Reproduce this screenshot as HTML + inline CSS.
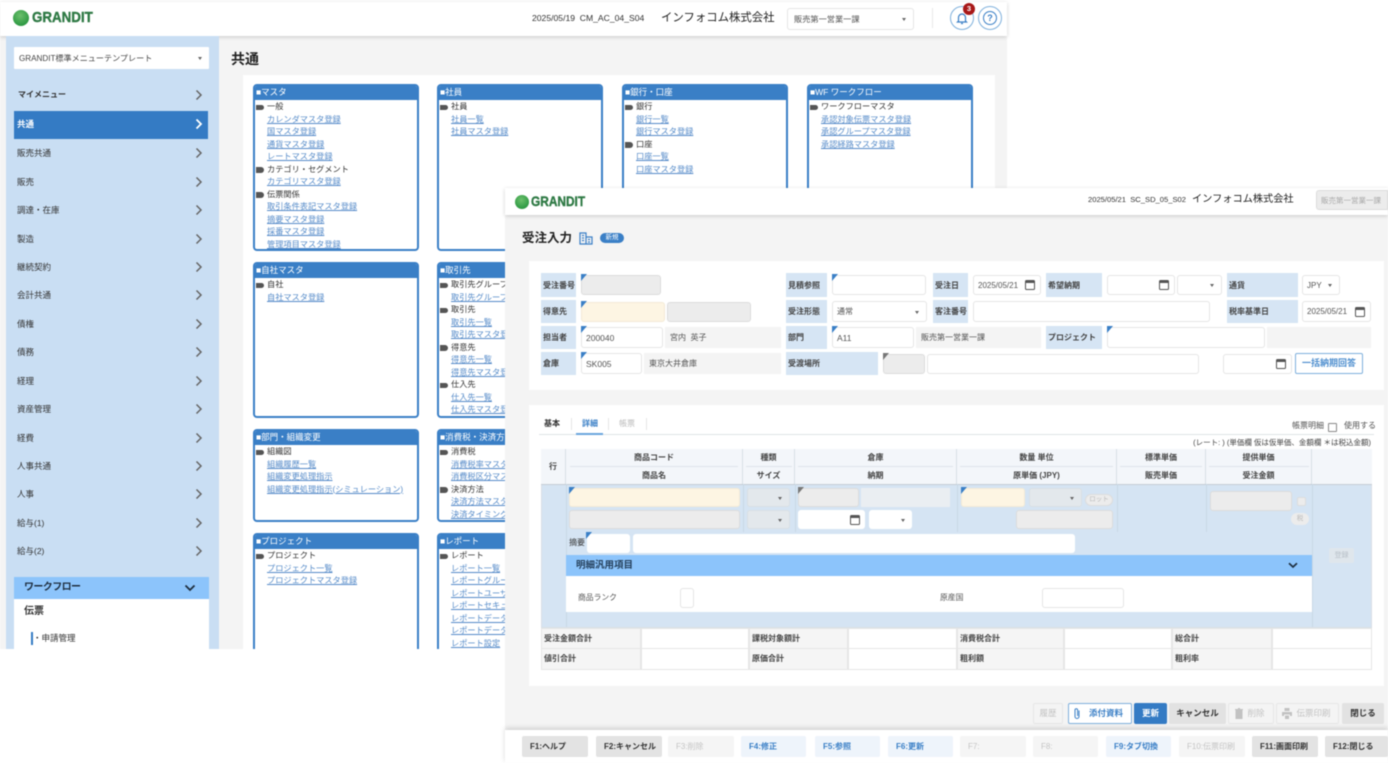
<!DOCTYPE html>
<html lang="ja"><head><meta charset="utf-8"><title>GRANDIT</title>
<style>
html,body{margin:0;padding:0;width:1388px;height:763px;overflow:hidden;background:#fff}
body{position:relative;font-family:"Liberation Sans","Noto Sans CJK JP",sans-serif;color:#333;filter:blur(.45px)}
div,span,a{box-sizing:border-box}
.a{position:absolute}
.t{position:absolute;white-space:nowrap;line-height:12px}
.logo{position:absolute;color:#2f7a45;font-weight:bold;transform-origin:0 50%;white-space:nowrap;-webkit-text-stroke:.4px #2f7a45}
.ball{position:absolute;border-radius:50%;background:radial-gradient(circle at 45% 35%,#6cc06c,#2f9a44 70%)}
.m{position:absolute;left:6px;width:213px;height:28px;font-size:8.5px;line-height:28px;padding-left:11px;white-space:nowrap}
.m svg{position:absolute;left:189px;top:8px}
.card{position:absolute;border:2px solid #3a7fc6;border-radius:4px;background:#fff;overflow:hidden;font-size:8.2px;line-height:12.5px}
.card b{display:block;height:14px;margin:0 0 1px;background:#3a7fc6;color:#fff;font-size:8.5px;line-height:13px;padding-left:1px;font-weight:normal;white-space:nowrap}
.h{position:relative;padding-left:12px;white-space:nowrap;color:#333}
.h::before{content:"";position:absolute;left:1px;top:3.5px;width:8px;height:5.5px;background:#555;border-radius:0 3px 3px 0}
.l{display:block;padding-left:12px;color:#568bc9;text-decoration:underline;white-space:nowrap}
.lb{position:absolute;background:#d6e5f4;font-size:8px;font-weight:bold;padding-left:2px;display:flex;align-items:center;white-space:nowrap;color:#444}
.f{position:absolute;background:#fff;border:1px solid #e5e5e5;border-radius:3px;font-size:8.5px;display:flex;align-items:center;padding-left:4px;white-space:nowrap;color:#555}
.g{background:#ececec;border-color:#dcdcdc}
.y{background:#fdf5e3;border-color:#f3ead6}
.s{background:#e3e8ec;border-color:#d9dfe4}
.n{position:absolute;background:#f4f4f4;font-size:8px;display:flex;align-items:center;padding-left:5px;white-space:nowrap;color:#555}
.k::before{content:"";position:absolute;left:-1px;top:-2px;border-top:7px solid #3a7fc6;border-right:6px solid transparent}
.kg::before{border-top-color:#777}
.ar::after{content:"";position:absolute;right:7px;top:50%;margin-top:-1px;border-top:3px solid #666;border-left:2.5px solid transparent;border-right:2.5px solid transparent}
.cal::after{content:"";position:absolute;right:5px;top:50%;margin-top:-5px;width:10px;height:10px;border:1.2px solid #555;border-top-width:3px;border-radius:1.5px;box-sizing:border-box}
.th{position:absolute;background:#f3f6fa;border-right:1px solid #d8dfe6;font-size:8px;font-weight:bold;color:#444;text-align:center;line-height:17px;white-space:nowrap}
.sm{position:absolute;font-size:8px;font-weight:bold;color:#444;background:#f5f5f5;border:1px solid #e6e6e6;padding-left:2px;line-height:19px;white-space:nowrap}
.sv{position:absolute;background:#fff;border:1px solid #e6e6e6}
.b{position:absolute;top:703px;height:21px;border-radius:2px;font-size:8.5px;font-weight:bold;text-align:center;line-height:21px;white-space:nowrap}
.bd{background:#f4f4f4;border:1px solid #e6e6e6;color:#c2c2c2;line-height:19px;font-weight:normal}
.bg{background:#e2e2e2;color:#333}
.fk{position:absolute;top:736px;height:21px;border-radius:2px;font-size:8px;font-weight:bold;line-height:21px;text-align:left;padding-left:8px;white-space:nowrap}
.f1{background:#e3e3e3;color:#333}
.f2{background:#f5f5f5;color:#c4c4c4;font-weight:normal}
.f3{background:#eef4fb;color:#3a7fc6}
</style></head><body>

<!-- BACK WINDOW -->
<div class="a" style="left:0;top:36px;width:1007px;height:613px;background:#f4f4f4"></div>
<div class="a" style="left:0;top:2px;width:1007px;height:34px;background:#fff;box-shadow:0 1px 4px rgba(0,0,0,.18)"></div>
<div class="ball" style="left:13px;top:10px;width:16px;height:16px"></div>
<div class="logo" style="left:32px;top:9px;font-size:15px;line-height:18px;transform:scaleX(.89)">GRANDIT</div>
<div class="t" style="left:532px;top:12px;font-size:8.6px">2025/05/19&nbsp; CM_AC_04_S04</div>
<div class="t" style="left:661px;top:11px;font-size:11.4px;line-height:14px;color:#222">インフォコム株式会社</div>
<div class="f ar" style="left:787px;top:8px;width:127px;height:22px;font-size:8.2px;padding-left:6px">販売第一営業一課</div>
<div class="a" style="left:932px;top:8px;width:1px;height:20px;background:#e8e8e8"></div>
<div class="a" style="left:950px;top:6px;width:24px;height:24px;border:1.2px solid #7fb0dc;border-radius:50%"></div>
<svg class="a" style="left:955px;top:11px" width="14" height="14" viewBox="0 0 14 14"><path d="M3.5 10V6.5a3.5 3.5 0 0 1 7 0V10l1 1H2.5zM6 12.5h2" fill="none" stroke="#3a7fc6" stroke-width="1.2"/></svg>
<div class="a" style="left:963px;top:3px;width:12px;height:12px;border-radius:50%;background:#a81818;color:#fff;font-size:7.5px;font-weight:bold;line-height:12px;text-align:center">3</div>
<div class="a" style="left:978px;top:6px;width:24px;height:24px;border:1.2px solid #7fb0dc;border-radius:50%"></div>
<div class="a" style="left:983px;top:11px;width:14px;height:14px;border:1.2px solid #3a7fc6;border-radius:50%;color:#3a7fc6;font-size:9px;font-weight:bold;line-height:12px;text-align:center">?</div>

<!-- sidebar -->
<div class="a" style="left:6px;top:36px;width:213px;height:613px;background:#c9def3"></div>
<div class="f ar" style="left:14px;top:47px;width:195px;height:22px;border:0;border-radius:1px;font-size:8.1px;color:#444;padding-left:5px">GRANDIT標準メニューテンプレート</div>
<div class="a" style="left:14px;top:111px;width:194px;height:28px;background:#347bc4"></div>
<div class="m" style="top:81px;font-size:8px;font-weight:bold;padding-left:12px"><svg width="8" height="12" viewBox="0 0 8 12"><path d="M1.5 1.5 6 6l-4.5 4.5" fill="none" stroke="#666" stroke-width="1.5"/></svg>マイメニュー</div>
<div class="m" style="top:110px;color:#fff;font-weight:bold"><svg width="8" height="12" viewBox="0 0 8 12"><path d="M1.5 1.5 6 6l-4.5 4.5" fill="none" stroke="#fff" stroke-width="1.8"/></svg>共通</div>
<div class="m" style="top:139px"><svg width="8" height="12" viewBox="0 0 8 12"><path d="M1.5 1.5 6 6l-4.5 4.5" fill="none" stroke="#666" stroke-width="1.5"/></svg>販売共通</div>
<div class="m" style="top:168px"><svg width="8" height="12" viewBox="0 0 8 12"><path d="M1.5 1.5 6 6l-4.5 4.5" fill="none" stroke="#666" stroke-width="1.5"/></svg>販売</div>
<div class="m" style="top:196px"><svg width="8" height="12" viewBox="0 0 8 12"><path d="M1.5 1.5 6 6l-4.5 4.5" fill="none" stroke="#666" stroke-width="1.5"/></svg>調達・在庫</div>
<div class="m" style="top:225px"><svg width="8" height="12" viewBox="0 0 8 12"><path d="M1.5 1.5 6 6l-4.5 4.5" fill="none" stroke="#666" stroke-width="1.5"/></svg>製造</div>
<div class="m" style="top:253px"><svg width="8" height="12" viewBox="0 0 8 12"><path d="M1.5 1.5 6 6l-4.5 4.5" fill="none" stroke="#666" stroke-width="1.5"/></svg>継続契約</div>
<div class="m" style="top:281px"><svg width="8" height="12" viewBox="0 0 8 12"><path d="M1.5 1.5 6 6l-4.5 4.5" fill="none" stroke="#666" stroke-width="1.5"/></svg>会計共通</div>
<div class="m" style="top:310px"><svg width="8" height="12" viewBox="0 0 8 12"><path d="M1.5 1.5 6 6l-4.5 4.5" fill="none" stroke="#666" stroke-width="1.5"/></svg>債権</div>
<div class="m" style="top:338px"><svg width="8" height="12" viewBox="0 0 8 12"><path d="M1.5 1.5 6 6l-4.5 4.5" fill="none" stroke="#666" stroke-width="1.5"/></svg>債務</div>
<div class="m" style="top:367px"><svg width="8" height="12" viewBox="0 0 8 12"><path d="M1.5 1.5 6 6l-4.5 4.5" fill="none" stroke="#666" stroke-width="1.5"/></svg>経理</div>
<div class="m" style="top:395px"><svg width="8" height="12" viewBox="0 0 8 12"><path d="M1.5 1.5 6 6l-4.5 4.5" fill="none" stroke="#666" stroke-width="1.5"/></svg>資産管理</div>
<div class="m" style="top:424px"><svg width="8" height="12" viewBox="0 0 8 12"><path d="M1.5 1.5 6 6l-4.5 4.5" fill="none" stroke="#666" stroke-width="1.5"/></svg>経費</div>
<div class="m" style="top:452px"><svg width="8" height="12" viewBox="0 0 8 12"><path d="M1.5 1.5 6 6l-4.5 4.5" fill="none" stroke="#666" stroke-width="1.5"/></svg>人事共通</div>
<div class="m" style="top:480px"><svg width="8" height="12" viewBox="0 0 8 12"><path d="M1.5 1.5 6 6l-4.5 4.5" fill="none" stroke="#666" stroke-width="1.5"/></svg>人事</div>
<div class="m" style="top:509px"><svg width="8" height="12" viewBox="0 0 8 12"><path d="M1.5 1.5 6 6l-4.5 4.5" fill="none" stroke="#666" stroke-width="1.5"/></svg>給与(1)</div>
<div class="m" style="top:537px"><svg width="8" height="12" viewBox="0 0 8 12"><path d="M1.5 1.5 6 6l-4.5 4.5" fill="none" stroke="#666" stroke-width="1.5"/></svg>給与(2)</div>
<div class="a" style="left:14px;top:577px;width:195px;height:22px;background:#8cc4fb;font-size:10px;font-weight:bold;line-height:22px;padding-left:10px;letter-spacing:-.6px;color:#1f2f40">ワークフロー</div>
<svg class="a" style="left:184px;top:584px" width="12" height="8" viewBox="0 0 12 8"><path d="M1.5 1.5 6 6l4.5-4.5" fill="none" stroke="#1f2f40" stroke-width="1.8"/></svg>
<div class="a" style="left:14px;top:599px;width:195px;height:50px;background:#fff"></div>
<div class="t" style="left:24px;top:606px;font-size:10px;font-weight:bold">伝票</div>
<div class="a" style="left:31px;top:632px;width:1.5px;height:13px;background:#347bc4"></div>
<div class="t" style="left:33px;top:632px;font-size:8.5px">・申請管理</div>

<!-- content -->
<div class="t" style="left:231px;top:51px;font-size:14px;font-weight:bold;line-height:16px;color:#222">共通</div>
<div class="a" style="left:243px;top:75px;width:752px;height:574px;background:#fff"></div>

<div class="card" style="left:253px;top:84px;width:166px;height:167px"><b>■マスタ</b><div class="h">一般</div><a class="l">カレンダマスタ登録</a><a class="l">国マスタ登録</a><a class="l">通貨マスタ登録</a><a class="l">レートマスタ登録</a><div class="h">カテゴリ・セグメント</div><a class="l">カテゴリマスタ登録</a><div class="h">伝票関係</div><a class="l">取引条件表記マスタ登録</a><a class="l">摘要マスタ登録</a><a class="l">採番マスタ登録</a><a class="l">管理項目マスタ登録</a></div>
<div class="card" style="left:437px;top:84px;width:166px;height:167px"><b>■社員</b><div class="h">社員</div><a class="l">社員一覧</a><a class="l">社員マスタ登録</a></div>
<div class="card" style="left:622px;top:84px;width:166px;height:167px"><b>■銀行・口座</b><div class="h">銀行</div><a class="l">銀行一覧</a><a class="l">銀行マスタ登録</a><div class="h">口座</div><a class="l">口座一覧</a><a class="l">口座マスタ登録</a></div>
<div class="card" style="left:807px;top:84px;width:166px;height:167px"><b>■WF ワークフロー</b><div class="h">ワークフローマスタ</div><a class="l">承認対象伝票マスタ登録</a><a class="l">承認グループマスタ登録</a><a class="l">承認経路マスタ登録</a></div>

<div class="card" style="left:253px;top:262px;width:166px;height:156px"><b>■自社マスタ</b><div class="h">自社</div><a class="l">自社マスタ登録</a></div>
<div class="card" style="left:437px;top:262px;width:166px;height:156px"><b>■取引先</b><div class="h">取引先グループ</div><a class="l">取引先グループ一覧</a><div class="h">取引先</div><a class="l">取引先一覧</a><a class="l">取引先マスタ登録</a><div class="h">得意先</div><a class="l">得意先一覧</a><a class="l">得意先マスタ登録</a><div class="h">仕入先</div><a class="l">仕入先一覧</a><a class="l">仕入先マスタ登録</a></div>

<div class="card" style="left:253px;top:429px;width:166px;height:93px"><b>■部門・組織変更</b><div class="h">組織図</div><a class="l">組織履歴一覧</a><a class="l">組織変更処理指示</a><a class="l">組織変更処理指示(シミュレーション)</a></div>
<div class="card" style="left:437px;top:429px;width:166px;height:93px"><b>■消費税・決済方法</b><div class="h">消費税</div><a class="l">消費税率マスタ登録</a><a class="l">消費税区分マスタ登録</a><div class="h">決済方法</div><a class="l">決済方法マスタ登録</a><a class="l">決済タイミングマスタ登録</a></div>

<div class="card" style="left:253px;top:533px;width:166px;height:130px"><b>■プロジェクト</b><div class="h">プロジェクト</div><a class="l">プロジェクト一覧</a><a class="l">プロジェクトマスタ登録</a></div>
<div class="card" style="left:437px;top:533px;width:166px;height:130px"><b>■レポート</b><div class="h">レポート</div><a class="l">レポート一覧</a><a class="l">レポートグループマスタ登録</a><a class="l">レポートユーザー登録</a><a class="l">レポートセキュリティ登録</a><a class="l">レポートデータ登録</a><a class="l">レポートデータ一覧</a><a class="l">レポート設定</a></div>
<div class="a" style="left:0;top:649px;width:505px;height:114px;background:#fff"></div>

<!-- FRONT WINDOW -->
<div class="a" style="left:505px;top:188px;width:883px;height:575px;background:#f4f4f4"></div>
<div class="a" style="left:505px;top:188px;width:883px;height:27px;background:#fff;box-shadow:0 1px 4px rgba(0,0,0,.18)"></div>
<div class="ball" style="left:515px;top:195px;width:14px;height:14px"></div>
<div class="logo" style="left:531px;top:194px;font-size:13.5px;line-height:16px;transform:scaleX(.88)">GRANDIT</div>
<div class="t" style="left:1088px;top:194px;font-size:7.6px">2025/05/21&nbsp; SC_SD_05_S02</div>
<div class="t" style="left:1192px;top:193px;font-size:10.2px;line-height:14px;color:#222">インフォコム株式会社</div>
<div class="f g" style="left:1316px;top:190px;width:72px;height:20px;font-size:7.5px;color:#aaa;border-radius:3px 0 0 3px">販売第一営業一課</div>
<div class="t" style="left:522px;top:231px;font-size:12.5px;font-weight:bold;line-height:14px;color:#222">受注入力</div>
<svg class="a" style="left:579px;top:232px" width="14" height="13" viewBox="0 0 14 13"><path d="M1 1h6v11H1zM7 5h6v7H7zM3 3.5h2M3 6h2M3 8.5h2M9 7.5h2M9 10h2" fill="none" stroke="#3a7fc6" stroke-width="1.2"/></svg>
<div class="a" style="left:600px;top:233px;width:24px;height:10px;border-radius:5px;background:#3a7fc6;color:#fff;font-size:6.5px;line-height:10px;text-align:center">新規</div>

<!-- form -->
<div class="a" style="left:529px;top:261px;width:855px;height:129px;background:#fff"></div>
<div class="lb" style="left:541px;top:273px;width:35px;height:24px">受注番号</div>
<div class="f g k" style="left:581px;top:275px;width:80px;height:20px"></div>
<div class="lb" style="left:786px;top:273px;width:41px;height:24px">見積参照</div>
<div class="f k" style="left:832px;top:275px;width:94px;height:20px"></div>
<div class="lb" style="left:933px;top:273px;width:35px;height:24px">受注日</div>
<div class="f cal" style="left:973px;top:275px;width:68px;height:20px;font-size:8px">2025/05/21</div>
<div class="lb" style="left:1046px;top:273px;width:56px;height:24px">希望納期</div>
<div class="f cal" style="left:1107px;top:275px;width:68px;height:20px"></div>
<div class="f ar" style="left:1177px;top:275px;width:45px;height:20px"></div>
<div class="lb" style="left:1227px;top:273px;width:71px;height:24px">通貨</div>
<div class="f ar" style="left:1302px;top:275px;width:38px;height:20px;font-size:8px">JPY</div>

<div class="lb" style="left:541px;top:300px;width:35px;height:23px">得意先</div>
<div class="f y k" style="left:581px;top:302px;width:84px;height:20px"></div>
<div class="f g" style="left:667px;top:302px;width:84px;height:20px"></div>
<div class="lb" style="left:786px;top:300px;width:41px;height:23px">受注形態</div>
<div class="f ar" style="left:832px;top:301px;width:95px;height:21px;font-size:8px">通常</div>
<div class="lb" style="left:933px;top:300px;width:35px;height:23px">客注番号</div>
<div class="f" style="left:973px;top:301px;width:237px;height:21px"></div>
<div class="lb" style="left:1227px;top:300px;width:71px;height:23px">税率基準日</div>
<div class="f cal" style="left:1302px;top:301px;width:69px;height:21px;font-size:8px">2025/05/21</div>

<div class="lb" style="left:541px;top:326px;width:35px;height:23px">担当者</div>
<div class="f k" style="left:581px;top:327px;width:82px;height:21px">200040</div>
<div class="n" style="left:665px;top:327px;width:116px;height:21px">宮内&nbsp; 英子</div>
<div class="lb" style="left:786px;top:326px;width:41px;height:23px">部門</div>
<div class="f k" style="left:832px;top:327px;width:82px;height:21px">A11</div>
<div class="n" style="left:916px;top:327px;width:125px;height:21px">販売第一営業一課</div>
<div class="lb" style="left:1046px;top:326px;width:56px;height:23px">プロジェクト</div>
<div class="f k" style="left:1107px;top:327px;width:158px;height:21px"></div>
<div class="n" style="left:1267px;top:327px;width:104px;height:21px"></div>

<div class="lb" style="left:541px;top:352px;width:35px;height:23px">倉庫</div>
<div class="f k" style="left:581px;top:353px;width:61px;height:21px">SK005</div>
<div class="n" style="left:644px;top:353px;width:137px;height:21px">東京大井倉庫</div>
<div class="lb" style="left:786px;top:352px;width:92px;height:23px">受渡場所</div>
<div class="f g k kg" style="left:883px;top:354px;width:42px;height:20px"></div>
<div class="f" style="left:927px;top:354px;width:272px;height:20px"></div>
<div class="f cal" style="left:1223px;top:354px;width:69px;height:20px"></div>
<div class="a" style="left:1295px;top:353px;width:68px;height:21px;border:1px solid #7fb0dc;border-radius:2px;background:#fff;color:#4f8fcf;font-size:9px;font-weight:bold;text-align:center;line-height:19px">一括納期回答</div>

<!-- detail -->
<div class="a" style="left:529px;top:405px;width:855px;height:281px;background:#fff"></div>
<div class="t" style="left:544px;top:418px;font-size:8px;font-weight:bold">基本</div>
<div class="t" style="left:582px;top:418px;font-size:8px;font-weight:bold;color:#3a7fc6">詳細</div>
<div class="t" style="left:619px;top:418px;font-size:8px;color:#bbb">帳票</div>
<div class="a" style="left:571px;top:418px;width:1px;height:12px;background:#e6e6e6"></div>
<div class="a" style="left:608px;top:418px;width:1px;height:12px;background:#e6e6e6"></div>
<div class="a" style="left:646px;top:418px;width:1px;height:12px;background:#e6e6e6"></div>
<div class="a" style="left:539px;top:434px;width:835px;height:1px;background:#dfe3e6"></div>
<div class="a" style="left:576px;top:433px;width:27px;height:2px;background:#6aa5dc"></div>
<div class="t" style="left:1292px;top:420px;font-size:8px;color:#555">帳票明細</div>
<div class="a" style="left:1328px;top:423px;width:9px;height:9px;border:1px solid #888;border-radius:1px"></div>
<div class="t" style="left:1344px;top:420px;font-size:8px;color:#555">使用する</div>
<div class="t" style="right:17px;top:437px;font-size:7.5px;color:#444">(レート: ) (単価欄 仮は仮単価、金額欄 ＊は税込金額)</div>

<div class="a" style="left:541px;top:449px;width:831px;height:179px;background:#d5e4f3;border:1px solid #d8dfe6"></div>
<div class="th" style="left:541px;top:449px;width:25px;height:35px;line-height:35px">行</div>
<div class="th" style="left:566px;top:449px;width:177px;height:18px">商品コード</div>
<div class="th" style="left:566px;top:467px;width:177px;height:17px">商品名</div>
<div class="th" style="left:743px;top:449px;width:52px;height:18px">種類</div>
<div class="th" style="left:743px;top:467px;width:52px;height:17px">サイズ</div>
<div class="th" style="left:795px;top:449px;width:162px;height:18px">倉庫</div>
<div class="th" style="left:795px;top:467px;width:162px;height:17px">納期</div>
<div class="th" style="left:957px;top:449px;width:160px;height:18px">数量 単位</div>
<div class="th" style="left:957px;top:467px;width:160px;height:17px">原単価 (JPY)</div>
<div class="th" style="left:1117px;top:449px;width:89px;height:18px">標準単価</div>
<div class="th" style="left:1117px;top:467px;width:89px;height:17px">販売単価</div>
<div class="th" style="left:1206px;top:449px;width:106px;height:18px">提供単価</div>
<div class="th" style="left:1206px;top:467px;width:106px;height:17px">受注金額</div>
<div class="th" style="left:1312px;top:449px;width:60px;height:35px;border-right:0"></div>
<div class="a" style="left:570px;top:466px;width:168px;height:1px;background:#dfe4ea"></div>
<div class="a" style="left:746px;top:466px;width:46px;height:1px;background:#dfe4ea"></div>
<div class="a" style="left:798px;top:466px;width:155px;height:1px;background:#dfe4ea"></div>
<div class="a" style="left:960px;top:466px;width:153px;height:1px;background:#dfe4ea"></div>
<div class="a" style="left:1120px;top:466px;width:82px;height:1px;background:#dfe4ea"></div>
<div class="a" style="left:1209px;top:466px;width:100px;height:1px;background:#dfe4ea"></div>
<div class="a" style="left:541px;top:484px;width:831px;height:1px;background:#c5cdd5"></div>
<div class="a" style="left:566px;top:484px;width:1px;height:143px;background:#c9d8e6"></div>
<div class="a" style="left:743px;top:484px;width:1px;height:48px;background:#c9d8e6"></div>
<div class="a" style="left:795px;top:484px;width:1px;height:48px;background:#c9d8e6"></div>
<div class="a" style="left:957px;top:484px;width:1px;height:48px;background:#c9d8e6"></div>
<div class="a" style="left:1117px;top:484px;width:1px;height:48px;background:#c9d8e6"></div>
<div class="a" style="left:1206px;top:484px;width:1px;height:48px;background:#c9d8e6"></div>
<div class="a" style="left:1312px;top:484px;width:1px;height:143px;background:#c9d8e6"></div>

<div class="f y k" style="left:569px;top:488px;width:171px;height:19px"></div>
<div class="f g" style="left:569px;top:510px;width:171px;height:19px"></div>
<div class="f s ar" style="left:747px;top:488px;width:43px;height:19px"></div>
<div class="f s ar" style="left:747px;top:510px;width:43px;height:19px"></div>
<div class="f g k kg" style="left:798px;top:488px;width:61px;height:19px"></div>
<div class="a" style="left:861px;top:488px;width:89px;height:19px;background:#eaeef2"></div>
<div class="f cal" style="left:798px;top:510px;width:67px;height:19px;border:0"></div>
<div class="f ar" style="left:869px;top:510px;width:43px;height:19px;border:0"></div>
<div class="f y k" style="left:961px;top:488px;width:64px;height:19px"></div>
<div class="f s ar" style="left:1029px;top:488px;width:53px;height:19px"></div>
<div class="a" style="left:1085px;top:494px;width:28px;height:12px;border:1px solid #ddd;border-radius:6px;background:#ececec;color:#bbb;font-size:6.5px;line-height:10px;text-align:center">ロット</div>
<div class="f g" style="left:1016px;top:510px;width:97px;height:19px"></div>
<div class="f g" style="left:1210px;top:491px;width:82px;height:20px"></div>
<div class="a" style="left:1297px;top:497px;width:9px;height:9px;background:#ececec;border:1px solid #ddd;border-radius:2px"></div>
<div class="a" style="left:1291px;top:513px;width:18px;height:12px;border-radius:6px;background:#ececec;color:#bbb;font-size:6.5px;line-height:12px;text-align:center">税</div>
<div class="t" style="left:569px;top:537px;font-size:8px">摘要</div>
<div class="f k" style="left:587px;top:534px;width:43px;height:19px;border:0"></div>
<div class="f" style="left:633px;top:534px;width:442px;height:19px;border:0"></div>
<div class="a" style="left:566px;top:555px;width:746px;height:21px;background:#8cc4fb;font-size:9.5px;font-weight:bold;line-height:21px;padding-left:10px;color:#25405c">明細汎用項目</div>
<svg class="a" style="left:1288px;top:562px" width="10" height="7" viewBox="0 0 10 7"><path d="M1 1.2 5 5l4-3.800" fill="none" stroke="#1f2f40" stroke-width="1.7"/></svg>
<div class="a" style="left:566px;top:576px;width:746px;height:36px;background:#fff"></div>
<div class="t" style="left:578px;top:592px;font-size:7.8px;color:#555">商品ランク</div>
<div class="f" style="left:680px;top:588px;width:14px;height:20px"></div>
<div class="t" style="left:940px;top:592px;font-size:7.8px;color:#555">原産国</div>
<div class="f" style="left:1042px;top:588px;width:82px;height:20px"></div>
<div class="a" style="left:1329px;top:548px;width:25px;height:15px;border-radius:2px;background:#dfe6ec;color:#b8c0c8;font-size:7px;line-height:15px;text-align:center">登録</div>

<div class="sm" style="left:541px;top:628px;width:100px;height:21px">受注金額合計</div><div class="sv" style="left:641px;top:628px;width:108px;height:21px"></div>
<div class="sm" style="left:749px;top:628px;width:99px;height:21px">課税対象額計</div><div class="sv" style="left:848px;top:628px;width:109px;height:21px"></div>
<div class="sm" style="left:957px;top:628px;width:107px;height:21px">消費税合計</div><div class="sv" style="left:1064px;top:628px;width:108px;height:21px"></div>
<div class="sm" style="left:1172px;top:628px;width:100px;height:21px">総合計</div><div class="sv" style="left:1272px;top:628px;width:100px;height:21px"></div>
<div class="sm" style="left:541px;top:648px;width:100px;height:22px">値引合計</div><div class="sv" style="left:641px;top:648px;width:108px;height:22px"></div>
<div class="sm" style="left:749px;top:648px;width:99px;height:22px">原価合計</div><div class="sv" style="left:848px;top:648px;width:109px;height:22px"></div>
<div class="sm" style="left:957px;top:648px;width:107px;height:22px">粗利額</div><div class="sv" style="left:1064px;top:648px;width:108px;height:22px"></div>
<div class="sm" style="left:1172px;top:648px;width:100px;height:22px">粗利率</div><div class="sv" style="left:1272px;top:648px;width:100px;height:22px"></div>

<!-- action buttons -->
<div class="b bd" style="left:1033px;width:30px">履歴</div>
<div class="b" style="left:1068px;width:64px;background:#fff;border:1px solid #7fb0dc;color:#3a7fc6;line-height:19px;padding-left:12px">添付資料</div>
<svg class="a" style="left:1073px;top:707px" width="8" height="13" viewBox="0 0 8 13"><path d="M6 3.5v6a2 2 0 0 1-4 0V3a1.3 1.300 0 0 1 2.600 0v6" fill="none" stroke="#3a7fc6" stroke-width="1"/></svg>
<div class="b" style="left:1134px;width:33px;background:#347bc4;color:#fff">更新</div>
<div class="b bg" style="left:1169px;width:57px">キャンセル</div>
<div class="b bd" style="left:1228px;width:46px;padding-left:10px">削除</div>
<svg class="a" style="left:1235px;top:708px" width="8" height="11" viewBox="0 0 8 11"><path d="M0 1.5h8M3 .5h2M1 2.500h6V10.500H1z" fill="#c2c2c2" stroke="#c2c2c2" stroke-width="1"/></svg>
<div class="b bd" style="left:1276px;width:63px;padding-left:12px">伝票印刷</div>
<svg class="a" style="left:1282px;top:708px" width="10" height="11" viewBox="0 0 10 11"><path d="M2.5 0h5v3h-5zM0 4h10v4H8V6.500H2V8H0zM3 7.500h4V11H3z" fill="#c2c2c2"/></svg>
<div class="b bg" style="left:1342px;width:42px">閉じる</div>

<!-- footer -->
<div class="a" style="left:505px;top:730px;width:883px;height:33px;background:#fff;box-shadow:0 -2px 5px rgba(0,0,0,.15)"></div>
<div class="fk f1" style="left:522px;width:66px">F1:ヘルプ</div>
<div class="fk f1" style="left:596px;width:66px">F2:キャンセル</div>
<div class="fk f2" style="left:668px;width:66px">F3:削除</div>
<div class="fk f3" style="left:741px;width:65px">F4:修正</div>
<div class="fk f3" style="left:815px;width:65px">F5:参照</div>
<div class="fk f3" style="left:888px;width:65px">F6:更新</div>
<div class="fk f2" style="left:960px;width:66px">F7:</div>
<div class="fk f2" style="left:1033px;width:65px">F8:</div>
<div class="fk f3" style="left:1106px;width:65px">F9:タブ切換</div>
<div class="fk f2" style="left:1179px;width:66px">F10:伝票印刷</div>
<div class="fk f1" style="left:1252px;width:66px">F11:画面印刷</div>
<div class="fk f1" style="left:1325px;width:63px">F12:閉じる</div>
</body></html>
